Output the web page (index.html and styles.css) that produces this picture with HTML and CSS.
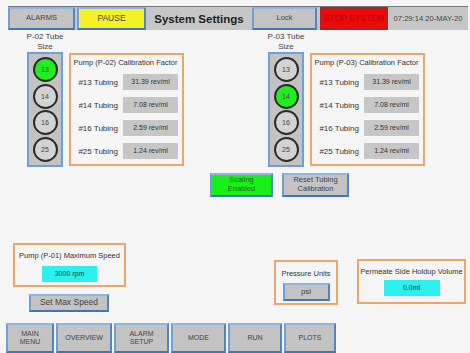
FILE: index.html
```html
<!DOCTYPE html>
<html lang="en">
<head>
  <meta charset="UTF-8">
  <title>System Settings</title>
  <link rel="stylesheet" href="styles.css">
</head>
<body>

  <div class="topbar">
    <div class="btn top-alarms">ALARMS</div>
    <div class="btn top-pause">PAUSE</div>
    <div class="top-title">System Settings</div>
    <div class="btn top-lock">Lock</div>
    <div class="btn top-stop">STOP SYSTEM</div>
    <div class="top-date">07:29:14 20-MAY-20</div>
  </div>

  <div class="pumps">
    <div class="pump-group">
      <div class="tube">
        <div class="tube-label">P-02 Tube<br>Size</div>
        <div class="tube-col">
          <div class="circle on">13</div>
          <div class="circle">14</div>
          <div class="circle">16</div>
          <div class="circle">25</div>
        </div>
      </div>
      <div class="cal-box">
        <div class="cal-title">Pump (P-02) Calibration Factor</div>
        <div class="cal-row"><span class="cal-label">#13 Tubing</span><span class="cal-value">31.39 rev/ml</span></div>
        <div class="cal-row"><span class="cal-label">#14 Tubing</span><span class="cal-value">7.08 rev/ml</span></div>
        <div class="cal-row"><span class="cal-label">#16 Tubing</span><span class="cal-value">2.59 rev/ml</span></div>
        <div class="cal-row"><span class="cal-label">#25 Tubing</span><span class="cal-value">1.24 rev/ml</span></div>
      </div>
    </div>

    <div class="pump-group right">
      <div class="tube">
        <div class="tube-label">P-03 Tube<br>Size</div>
        <div class="tube-col">
          <div class="circle">13</div>
          <div class="circle on">14</div>
          <div class="circle">16</div>
          <div class="circle">25</div>
        </div>
      </div>
      <div class="cal-box">
        <div class="cal-title">Pump (P-03) Calibration Factor</div>
        <div class="cal-row"><span class="cal-label">#13 Tubing</span><span class="cal-value">31.39 rev/ml</span></div>
        <div class="cal-row"><span class="cal-label">#14 Tubing</span><span class="cal-value">7.08 rev/ml</span></div>
        <div class="cal-row"><span class="cal-label">#16 Tubing</span><span class="cal-value">2.59 rev/ml</span></div>
        <div class="cal-row"><span class="cal-label">#25 Tubing</span><span class="cal-value">1.24 rev/ml</span></div>
      </div>
    </div>
  </div>

  <div class="actions">
    <div class="btn scaling">Scaling<br>Enabled</div>
    <div class="btn reset">Reset Tubing<br>Calibration</div>
  </div>

  <div class="settings">
    <div class="speed-col">
      <div class="box speed-box">
        <div class="box-title">Pump (P-01) Maximum Speed</div>
        <div class="cyan-value speed-value">3000 rpm</div>
      </div>
      <div class="btn set-speed">Set Max Speed</div>
    </div>
    <div class="box pressure-box">
      <div class="box-title">Pressure Units</div>
      <div class="btn psi">psi</div>
    </div>
    <div class="box permeate-box">
      <div class="box-title">Permeate Side Holdup Volume</div>
      <div class="cyan-value permeate-value">0.0ml</div>
    </div>
  </div>

  <div class="nav">
    <div class="btn nav-btn w48">MAIN<br>MENU</div>
    <div class="btn nav-btn w56">OVERVIEW</div>
    <div class="btn nav-btn w55">ALARM<br>SETUP</div>
    <div class="btn nav-btn w55">MODE</div>
    <div class="btn nav-btn w54">RUN</div>
    <div class="btn nav-btn w52">PLOTS</div>
  </div>

</body>
</html>
```

FILE: styles.css
```css
body {
  margin: 0;
  width: 470px;
  height: 353px;
  overflow: hidden;
  background: #f5f5f5;
  font-family: "Liberation Sans", Arial, sans-serif;
  color: #333;
}
.btn {
  box-sizing: border-box;
  display: flex;
  align-items: center;
  justify-content: center;
  text-align: center;
  background: #c3c3c3;
  border: 2px solid;
  border-color: #8fb5e3 #4f84c8 #3f74bd #6f9ed8;
  color: #444;
  line-height: 1.15;
}

/* top bar */
.topbar {
  display: flex;
  margin: 6px 2px 0 8px;
  height: 24px;
  background: #c6c6c6;
  border-top: 1px solid #777;
  box-sizing: border-box;
}
.topbar .btn {
  font-size: 7.5px;
  height: 23px;
}
.top-alarms { width: 67px; }
.top-pause {
  width: 69px;
  margin-left: 2px;
  background: #f2f227;
  font-size: 8.5px !important;
}
.top-title {
  width: 106px;
  display: flex;
  align-items: center;
  justify-content: center;
  font-size: 11.5px;
  font-weight: bold;
  color: #222;
}
.top-lock { width: 65px; }
.top-stop {
  width: 68px;
  margin-left: 3px;
  background: #ee0a0a;
  border-color: #b62020 !important;
  color: #b00000 !important;
  font-size: 8.5px !important;
}
.top-date {
  flex: 1;
  display: flex;
  align-items: center;
  justify-content: center;
  font-size: 7.6px;
  color: #444;
}

/* pumps */
.pumps {
  display: flex;
  margin-top: 2px;
  padding-left: 27px;
}
.pump-group {
  display: flex;
  gap: 6px;
}
.pump-group.right {
  margin-left: 84px;
}
.tube {
  width: 36px;
  display: flex;
  flex-direction: column;
  align-items: center;
}
.tube-label {
  font-size: 8px;
  line-height: 10px;
  text-align: center;
  white-space: nowrap;
  color: #444;
}
.tube-col {
  box-sizing: border-box;
  width: 36px;
  height: 115px;
  background: #c3c3c3;
  border: 2px solid #6f9ed8;
  display: flex;
  flex-direction: column;
  align-items: center;
  justify-content: space-around;
  padding: 2px 0;
}
.circle {
  box-sizing: border-box;
  width: 25px;
  height: 25px;
  border-radius: 50%;
  border: 2px solid #2c2c2c;
  background: #d3d3d3;
  display: flex;
  align-items: center;
  justify-content: center;
  font-size: 7px;
  color: #444;
}
.circle.on {
  background: #22ee1e;
}
.cal-box {
  box-sizing: border-box;
  margin-top: 21px;
  width: 115px;
  height: 113px;
  border: 2px solid #eaa768;
  padding: 3px 4px 0 2px;
  display: flex;
  flex-direction: column;
  gap: 7px;
}
.cal-title {
  font-size: 7.5px;
  line-height: 10px;
  text-align: center;
  white-space: nowrap;
  color: #333;
  margin-bottom: -1px;
}
.cal-row {
  display: flex;
  align-items: center;
  gap: 5px;
  height: 16px;
}
.cal-label {
  width: 45px;
  text-align: right;
  font-size: 8px;
  white-space: nowrap;
  color: #333;
}
.cal-value {
  width: 55px;
  height: 16px;
  background: #c6c6c6;
  font-size: 7px;
  line-height: 16px;
  text-align: center;
  color: #333;
}

/* scaling buttons */
.actions {
  display: flex;
  gap: 9px;
  margin-top: 6px;
  padding-left: 210px;
}
.actions .btn {
  height: 24px;
  font-size: 7.5px;
}
.scaling {
  width: 63px;
  background: #19f019;
  color: #1c6a1c;
}
.reset {
  width: 67px;
}

/* settings boxes */
.settings {
  display: flex;
  align-items: flex-start;
  margin-top: 46px;
  padding-left: 13px;
}
.box {
  box-sizing: border-box;
  border: 2px solid #eaa768;
  display: flex;
  flex-direction: column;
  align-items: center;
}
.box-title {
  font-size: 7.5px;
  white-space: nowrap;
  color: #333;
}
.speed-col {
  width: 113px;
}
.speed-box {
  height: 44px;
  padding-top: 6px;
}
.cyan-value {
  background: #2cefef;
  font-size: 7px;
  height: 16px;
  line-height: 16px;
  text-align: center;
  color: #333;
}
.speed-value {
  width: 55px;
  margin-top: 6px;
}
.set-speed {
  width: 80px;
  height: 18px;
  margin: 7px 0 0 16px;
  font-size: 8.5px;
}
.pressure-box {
  width: 64px;
  height: 45px;
  margin: 17px 0 0 148px;
  padding-top: 7px;
}
.psi {
  width: 47px;
  height: 18px;
  margin-top: 5px;
  font-size: 8px;
}
.permeate-box {
  width: 109px;
  height: 45px;
  margin: 16px 0 0 19px;
  padding-top: 6px;
}
.permeate-value {
  width: 56px;
  margin-top: 4px;
}

/* bottom nav */
.nav {
  display: flex;
  gap: 2px;
  margin-top: 11px;
  padding-left: 6px;
}
.nav-btn {
  height: 30px;
  font-size: 7px;
}
.w48 { width: 48px; }
.w52 { width: 52px; }
.w54 { width: 54px; }
.w55 { width: 55px; }
.w56 { width: 56px; }
```
